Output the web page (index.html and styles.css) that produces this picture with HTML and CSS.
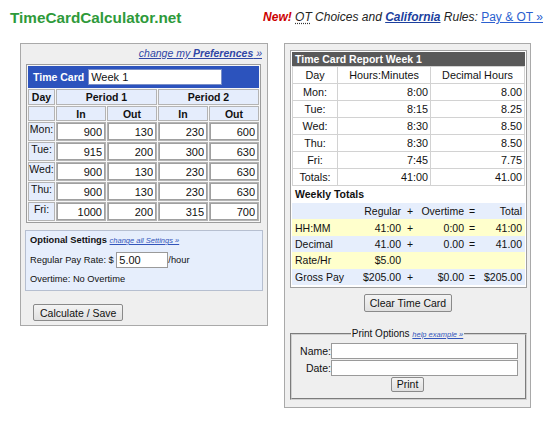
FILE: index.html
```html
<!DOCTYPE html>
<html lang="en">
<head>
<meta charset="utf-8">
<title>TimeCardCalculator.net</title>
<link rel="stylesheet" href="styles.css">
</head>
<body>
<header class="top">
  <div class="logo">TimeCardCalculator.net</div>
  <div class="news"><b class="new">New!</b> <abbr class="ot" title="Overtime">OT</abbr> Choices and <a class="ca" href="#">California</a> Rules: <a class="pay" href="#">Pay &amp; OT »</a></div>
</header>
<main class="main">
  <section class="panel left">
    <div class="prefs"><a href="#">change my <b>Preferences</b> »</a></div>
    <table class="tc">
      <tr class="tc-title"><td colspan="5"><span class="tc-label">Time Card</span><input class="week" value="Week 1"></td></tr>
      <tr class="h1"><th>Day</th><th colspan="2">Period 1</th><th colspan="2">Period 2</th></tr>
      <tr class="h2"><th class="c-day"></th><th class="c-in">In</th><th class="c-in">Out</th><th class="c-in">In</th><th class="c-in">Out</th></tr>
      <tr class="row"><th class="day">Mon:</th><td><input value="900"></td><td><input value="130"></td><td><input value="230"></td><td><input value="600"></td></tr>
      <tr class="row"><th class="day">Tue:</th><td><input value="915"></td><td><input value="200"></td><td><input value="300"></td><td><input value="630"></td></tr>
      <tr class="row"><th class="day">Wed:</th><td><input value="900"></td><td><input value="130"></td><td><input value="230"></td><td><input value="630"></td></tr>
      <tr class="row"><th class="day">Thu:</th><td><input value="900"></td><td><input value="130"></td><td><input value="230"></td><td><input value="630"></td></tr>
      <tr class="row"><th class="day">Fri:</th><td><input value="1000"></td><td><input value="200"></td><td><input value="315"></td><td><input value="700"></td></tr>
    </table>
    <div class="opt">
      <div class="opt-line"><b>Optional Settings</b> <a class="small-link" href="#">change all Settings »</a></div>
      <div class="opt-line rate">Regular Pay Rate: $ <input class="rate-input" value="5.00">/hour</div>
      <div class="opt-line">Overtime: No Overtime</div>
    </div>
    <div class="calc-row"><button class="btn">Calculate / Save</button></div>
  </section>

  <section class="panel right">
    <div class="report">
      <div class="rhead">Time Card Report Week 1</div>
      <table class="rt">
        <tr><td>Day</td><td>Hours:Minutes</td><td>Decimal Hours</td></tr>
        <tr><td>Mon:</td><td>8:00</td><td>8.00</td></tr>
        <tr><td>Tue:</td><td>8:15</td><td>8.25</td></tr>
        <tr><td>Wed:</td><td>8:30</td><td>8.50</td></tr>
        <tr><td>Thu:</td><td>8:30</td><td>8.50</td></tr>
        <tr><td>Fri:</td><td>7:45</td><td>7.75</td></tr>
        <tr class="tot"><td>Totals:</td><td>41:00</td><td>41.00</td></tr>
      </table>
      <div class="wt">Weekly Totals</div>
      <table class="wk">
        <tr class="blue"><td></td><td class="n">Regular</td><td class="op">+</td><td class="n">Overtime</td><td class="op">=</td><td class="n">Total</td></tr>
        <tr class="yel"><td>HH:MM</td><td class="n">41:00</td><td class="op">+</td><td class="n">0:00</td><td class="op">=</td><td class="n">41:00</td></tr>
        <tr class="blue"><td>Decimal</td><td class="n">41.00</td><td class="op">+</td><td class="n">0.00</td><td class="op">=</td><td class="n">41.00</td></tr>
        <tr class="yel"><td>Rate/Hr</td><td class="n">$5.00</td><td></td><td></td><td></td><td></td></tr>
        <tr class="blue"><td>Gross Pay</td><td class="n">$205.00</td><td class="op">+</td><td class="n">$0.00</td><td class="op">=</td><td class="n">$205.00</td></tr>
      </table>
    </div>
    <div class="clear-row"><button class="btn">Clear Time Card</button></div>
    <fieldset class="print">
      <legend>Print Options <a class="small-link" href="#">help example »</a></legend>
      <div class="pgrid">
        <label for="pn">Name:</label><input id="pn" class="pinput">
        <label for="pd">Date:</label><input id="pd" class="pinput">
      </div>
      <div class="print-row"><button class="btn pbtn">Print</button></div>
    </fieldset>
  </section>
</main>
</body>
</html>
```

FILE: styles.css
```css
* { box-sizing: border-box; }
html, body { margin: 0; padding: 0; }
body {
  background: #fff;
  font-family: "Liberation Sans", Arial, sans-serif;
  font-size: 10.5px;
  color: #111;
  width: 550px;
  height: 421px;
  overflow: hidden;
}
input, button { font-family: "Liberation Sans", Arial, sans-serif; color: #111; }

/* header */
.top { display: flex; align-items: flex-start; height: 43px; }
.logo { padding: 9px 0 0 10px; font-size: 15.3px; line-height: 18px; font-weight: bold; color: #2e9a3a; }
.news { margin-left: auto; padding: 10px 7px 0 0; font-size: 12px; line-height: 14px; font-style: italic; color: #222; }
.new { color: #cc0000; }
.ot { text-decoration: underline dotted #333; text-underline-offset: 2px; }
.ca { color: #1c3f9e; font-weight: bold; text-decoration: underline; }
.pay { color: #2b5fcf; font-style: normal; text-decoration: underline; }

/* layout */
.main { display: flex; align-items: flex-start; gap: 16px; padding-left: 20px; }
.panel { background: #efefef; border: 1px solid #a9a9a9; }

/* left panel */
.left { width: 248px; padding-bottom: 4px; }
.prefs { text-align: right; padding: 3px 5px 0 0; font-size: 10.5px; line-height: 12px; font-style: italic; }
.prefs a { color: #3046a6; text-decoration: underline; }
.tc {
  margin: 5px 0 0 5px;
  width: 235px;
  border: 1px solid #9c9c9c;
  border-spacing: 1px;
  background: #f7f7f7;
}
.tc td, .tc th { padding: 0; }
.tc-title td { background: #2c53bd; height: 22px; padding: 0 0 0 5px; vertical-align: middle; }
.tc-label { color: #fff; font-weight: bold; font-size: 10.5px; margin-right: 4px; vertical-align: middle; }
.week { width: 134px; height: 16px; border: 1px solid #7a8fc8; padding: 0 2px; font-size: 11px; vertical-align: middle; background: #fff; }
.h1 th, .h2 th { background: #e5edfc; border: 1px solid #b4b4b4; font-size: 10.5px; font-weight: bold; text-align: center; color: #111; }
.h1 th { height: 16px; }
.h2 th { height: 15px; }
.c-day { width: 27px; }
.c-in { width: 50px; }
.row th, .row td { height: 19px; border: 1px solid #b4b4b4; }
.row th { background: #e5edfc; font-weight: normal; vertical-align: top; text-align: center; line-height: 12px; font-size: 10.5px; }
.row td { background: #fff; vertical-align: top; }
.row input {
  display: block;
  width: 48px;
  height: 17px;
  border: 1px solid #a0a0a0;
  padding: 0 2px;
  font-size: 11px;
  text-align: right;
  background: #fff;
}

.opt {
  margin: 7px 0 0 4px;
  width: 238px;
  background: #e6eefc;
  border: 1px solid #b6bfd0;
  padding: 3px 4px 5px 4px;
  font-size: 9.3px;
}
.opt-line { line-height: 12px; }
.opt-line b { font-size: 9.3px; }
.opt-line.rate { margin-top: 5px; display: flex; align-items: center; height: 16px; white-space: pre; }
.opt-line.rate + .opt-line { margin-top: 5px; }
.rate-input { width: 52px; height: 16px; border: 1px solid #9a9a9a; padding: 0 2px; font-size: 11px; background: #fff; }
.small-link { font-size: 7.5px; font-style: italic; color: #3355bb; text-decoration: underline; font-weight: normal; }

.btn {
  font-size: 10.5px;
  background: linear-gradient(#f4f4f4, #e0e0e0);
  border: 1px solid #8a8a8a;
  border-radius: 2px;
  padding: 0 6px;
  line-height: 14px;
  height: 17px;
  white-space: nowrap;
}
.calc-row { margin: 13px 0 0 12px; }

/* right panel */
.right { width: 247px; padding: 6px 4px 7px 5px; }
.report { border: 1px solid #a0a0a0; background: #fff; padding: 1px 1px 2px 1px; width: 237px; }
.rhead { background: #595959; color: #fff; font-weight: bold; font-size: 10.5px; line-height: 14px; height: 14px; padding-left: 3px; }
.rt { width: 233px; border-collapse: collapse; font-size: 10.8px; }
.rt td { border: 1px solid #d2d2d2; height: 17px; padding: 0 2px; text-align: right; line-height: 12px; }
.rt td:first-child { text-align: center; width: 45px; }
.rt td:nth-child(2) { width: 93px; }
.rt tr:first-child td { text-align: center; }
.wt { font-weight: bold; font-size: 10.5px; line-height: 17px; padding-left: 3px; }
.wk { width: 233px; border-collapse: collapse; font-size: 10.5px; }
.wk td { height: 16.4px; padding: 0 3px; line-height: 12px; }
.wk td:first-child { width: 63px; }
.wk td:nth-child(2) { width: 47px; }
.wk td:nth-child(3) { width: 16px; }
.wk td:nth-child(4) { width: 47px; }
.wk td:nth-child(5) { width: 14px; }
.wk td.n { text-align: right; padding: 0 1px 0 0; }
.wk td:last-child.n { padding-right: 3px; }
.wk td.op { text-align: center; padding: 0; }
.blue td { background: #e6eefc; }
.yel td { background: #ffffcc; }

.clear-row { text-align: center; margin-top: 6px; }
.clear-row .btn { height: 18px; padding: 0 5px; }

.print {
  margin: 16px 0 0 0;
  width: 237px;
  border: 2px groove #d0d0d0;
  padding: 0 7px 6px 5px;
  font-size: 10.5px;
}
.print legend { margin: 0 auto; padding: 0 1px; font-size: 10px; line-height: 12px; }
.pgrid { display: grid; grid-template-columns: 34px 187px; row-gap: 1px; margin-top: 2px; align-items: center; }
.pgrid label { text-align: right; font-size: 10.5px; }
.pinput { width: 187px; height: 16px; border: 1px solid #9a9a9a; background: #fff; padding: 0 2px; font-size: 11px; }
.print-row { text-align: center; margin-top: 1px; }
.pbtn { height: 15px; padding: 0 5px; line-height: 12px; }
```
